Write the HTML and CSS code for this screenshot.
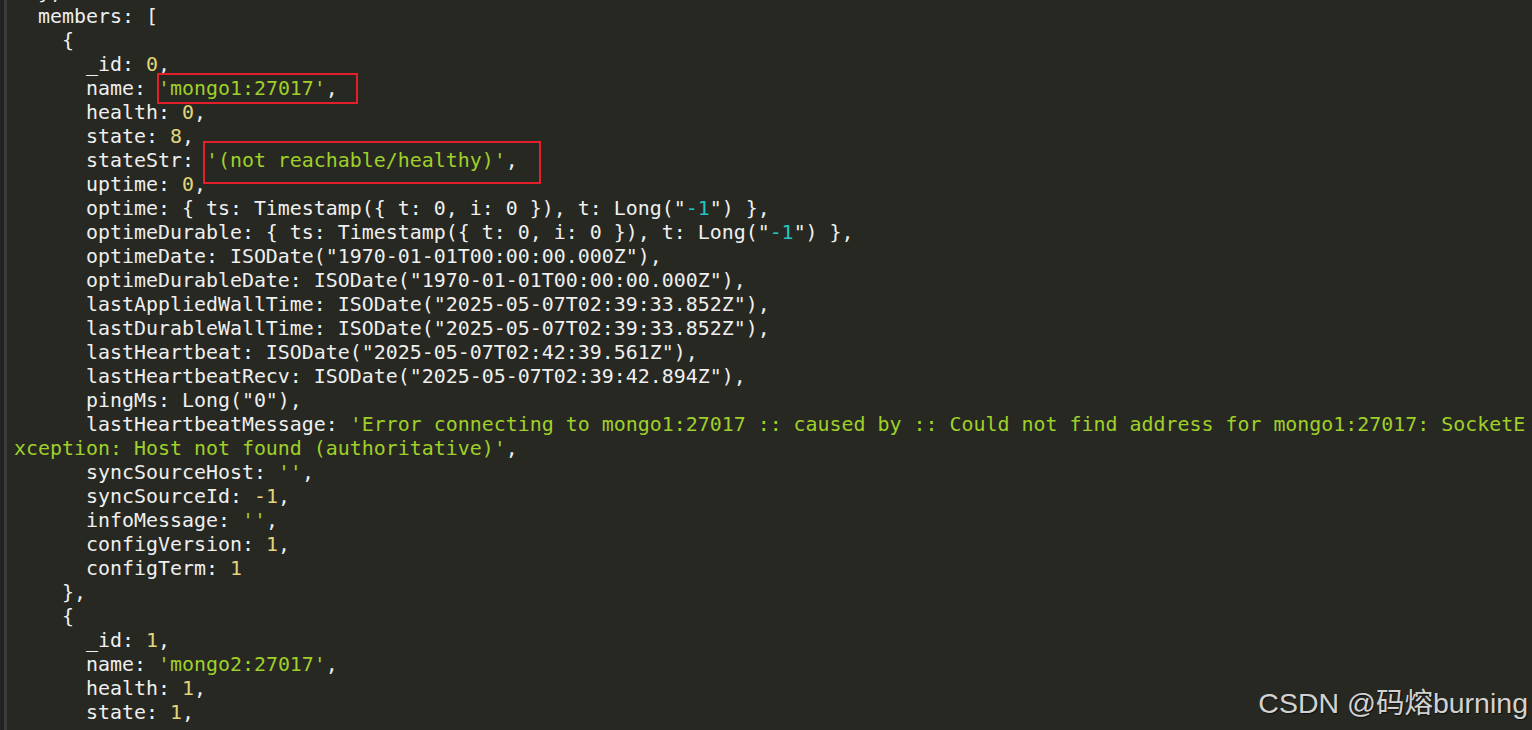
FILE: index.html
```html
<!DOCTYPE html>
<html>
<head>
<meta charset="utf-8">
<link rel="stylesheet" href="styles.css">
</head>
<body>
<div class="term">
<div class="gutter"></div>
<div class="screen">
<pre class="code">  },
  members: [
    {
      _id: <span class="n">0</span>,
      name: <span class="s">'mongo1:27017'</span>,
      health: <span class="n">0</span>,
      state: <span class="n">8</span>,
      stateStr: <span class="s">'(not reachable/healthy)'</span>,
      uptime: <span class="n">0</span>,
      optime: { ts: Timestamp({ t: 0, i: 0 }), t: Long("<span class="c">-1</span>") },
      optimeDurable: { ts: Timestamp({ t: 0, i: 0 }), t: Long("<span class="c">-1</span>") },
      optimeDate: ISODate("1970-01-01T00:00:00.000Z"),
      optimeDurableDate: ISODate("1970-01-01T00:00:00.000Z"),
      lastAppliedWallTime: ISODate("2025-05-07T02:39:33.852Z"),
      lastDurableWallTime: ISODate("2025-05-07T02:39:33.852Z"),
      lastHeartbeat: ISODate("2025-05-07T02:42:39.561Z"),
      lastHeartbeatRecv: ISODate("2025-05-07T02:39:42.894Z"),
      pingMs: Long("0"),
      lastHeartbeatMessage: <span class="s">'Error connecting to mongo1:27017 :: caused by :: Could not find address for mongo1:27017: SocketE</span>
<span class="s">xception: Host not found (authoritative)'</span>,
      syncSourceHost: <span class="s">''</span>,
      syncSourceId: <span class="n">-1</span>,
      infoMessage: <span class="s">''</span>,
      configVersion: <span class="n">1</span>,
      configTerm: <span class="n">1</span>
    },
    {
      _id: <span class="n">1</span>,
      name: <span class="s">'mongo2:27017'</span>,
      health: <span class="n">1</span>,
      state: <span class="n">1</span>,</pre>
<div class="mark mark-name"></div>
<div class="mark mark-state"></div>
</div>
</div>
<div class="watermark">CSDN @码熔burning</div>
</body>
</html>
```
FILE: styles.css
```css
html, body {
  margin: 0;
  padding: 0;
  width: 1532px;
  height: 730px;
  overflow: hidden;
  background: #272822;
}
.term {
  display: flex;
  height: 730px;
  background: #272822;
}
.gutter {
  width: 4px;
  flex: none;
  background: #222222;
  border-right: 3px solid #3b3b3b;
}
.screen {
  position: relative;
  flex: 1;
  padding-left: 7px;
}
.code {
  margin: -19px 0 0 0;
  font-family: "DejaVu Sans Mono", monospace;
  font-size: 19.93px;
  line-height: 24px;
  color: #efefef;
  white-space: pre;
}
.s { color: #9fd02a; }
.n { color: #e2d67a; }
.c { color: #23c4c4; }
.mark {
  position: absolute;
  border: 2px solid #e3202a;
  box-sizing: border-box;
}
.mark-name {
  left: 150px;
  top: 73px;
  width: 201px;
  height: 31px;
}
.mark-state {
  left: 196px;
  top: 141px;
  width: 338px;
  height: 43px;
}
.watermark {
  position: absolute;
  right: 4px;
  bottom: 10px;
  font-family: "Liberation Sans", "Noto Sans CJK SC", sans-serif;
  font-size: 28.5px;
  line-height: 34px;
  color: #d2d2d2;
  text-shadow: 1px 1px 1px rgba(0,0,0,0.6);
}
```
